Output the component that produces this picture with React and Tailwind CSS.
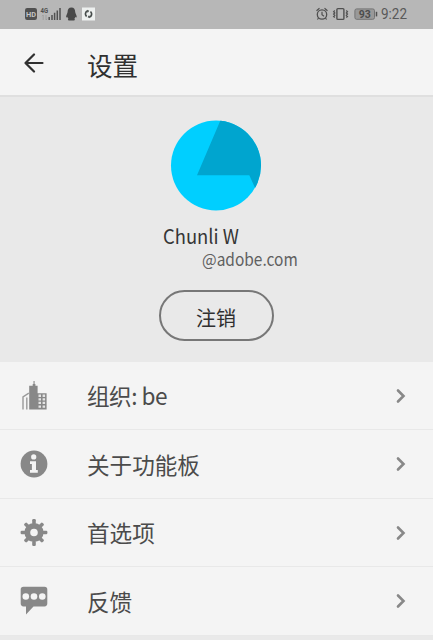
const CJK = "font-['Noto_Sans_CJK_SC',sans-serif]";

function StatusBar() {
  return (
    <div className="flex h-[29px] w-full items-center bg-[#b7b7b7] text-[#4d4d4d]">
      <svg width="110" height="29" viewBox="0 0 110 29" className="shrink-0">
        <rect x="25" y="8" width="12" height="12" rx="2.2" fill="#505050" />
        <text x="31" y="17" fontSize="8" fontWeight="700" textAnchor="middle" textLength="10" lengthAdjust="spacingAndGlyphs" fill="#c4c4c4" fontFamily="Roboto, sans-serif">HD</text>
        <text x="40.6" y="13.2" fontSize="7" fontWeight="700" textLength="7.6" lengthAdjust="spacingAndGlyphs" fill="#505050" fontFamily="Roboto, sans-serif">4G</text>
        <path d="M43.2 15v5M42 16.2l1.2-1.2M46 15v5M46 20l1.2-1.2" stroke="#9a9a9a" strokeWidth="0.8" fill="none" />
        <path d="M49.2 17v3M52 15v5M54.6 12.8v7.2M57.3 10.4v9.6M60 8v12" stroke="#505050" strokeWidth="1.5" />
        <path d="M71.4 7.6c-2.7 0-3.8 2-3.8 4.4 0 1.2-1.5 3-1.5 4.7 0 .9.5.9 1.2.1.2 1 .6 1.5 1.2 2-.8.4-.9 1.7.5 1.7h4.8c1.4 0 1.3-1.3.5-1.7.6-.5 1-1 1.2-2 .7.8 1.2.8 1.2-.1 0-1.7-1.5-3.5-1.5-4.7 0-2.4-1.1-4.4-3.8-4.400z" fill="#484848" />
        <rect x="82" y="7.5" width="13" height="13" fill="#edf0ef" />
        <path d="M87.6 10.8c-2.300 1-3 3.900-1 5.700M89.200 17.200c2.600-.8 3.300-3.800 1.300-5.700" stroke="#454b4a" strokeWidth="1.7" fill="none" />
        <path d="M87 9.800l2.200 1-1.500 2.100zM89.800 18.200l-2.200-1 1.500-2.100z" fill="#454b4a" />
      </svg>
      <div className="flex-1" />
      <svg width="133" height="29" viewBox="300 0 133 29" className="shrink-0" fill="none" stroke="#505050">
        <circle cx="322" cy="14.5" r="4.7" strokeWidth="1.3" />
        <path d="M316.5 10.800l3-2.500M327.500 10.800l-3-2.500M322 11.800v3l2 1.400M318.600 18l-1.200 1.500M325.400 18l1.200 1.500" strokeWidth="1.2" />
        <rect x="336.9" y="8.6" width="7" height="10.8" rx="1" strokeWidth="1.4" />
        <path d="M334.800 10.500l-1.200 1.200 1.200 1.200-1.200 1.200 1.200 1.200-1.200 1.200 1.200 1M346.300 10.500l1.200 1.200-1.200 1.200 1.200 1.200-1.200 1.200 1.200 1.200-1.200 1" strokeWidth="1.2" />
        <rect x="354.9" y="8.9" width="19.6" height="10.4" rx="1.8" fill="#999999" stroke="#737373" strokeWidth="1" />
        <path d="M376.5 11.800v4.600" strokeWidth="1.5" />
        <text x="364.7" y="18" fontSize="10.5" fontWeight="700" textAnchor="middle" fill="#4c4c4c" stroke="none" fontFamily="Roboto, sans-serif">93</text>
        <text x="381" y="18.900" fontSize="14" textLength="26" lengthAdjust="spacingAndGlyphs" fill="#595959" stroke="none" fontFamily="Roboto, sans-serif">9:22</text>
      </svg>
    </div>
  );
}

function BuildingIcon() {
  return (
    <svg width="28" height="32" viewBox="0 0 28 32" fill="#888">
      <path d="M9.200 29.500V5.700h3.500V4h.8V1h1.100v3h.8v1.700h2.200v7.500h9v16.300z" />
      <path d="M3 29.500V16.800l5.800-3.600" fill="none" stroke="#999" strokeWidth="1.4" />
      <path d="M6.800 29.500V17.500" fill="none" stroke="#a0a0a0" strokeWidth="1.5" />
      <path d="M18.500 14.600h2.500v2.300h-2.500zM22.600 14.600h2.500v2.300h-2.500zM18.500 18.200h2.500v2.300h-2.500zM22.600 18.200h2.500v2.300h-2.500zM18.500 21.800h2.500v2.300h-2.500zM22.600 21.800h2.500v2.300h-2.500zM18.500 25.400h2.500v2.300h-2.500zM22.600 25.400h2.500v2.300h-2.500z" fill="#e4e4e4" />
    </svg>
  );
}

function InfoIcon() {
  return (
    <svg width="28" height="28" viewBox="0 0 28 28">
      <circle cx="14" cy="14" r="13.4" fill="#888" />
      <circle cx="13.7" cy="6.9" r="2.6" fill="#f4f4f4" />
      <path d="M10 11.200h6v8.800h1.800v2.800H10V20h1.900v-6H10z" fill="#f4f4f4" />
    </svg>
  );
}

const TEETH = [0, 45, 90, 135, 180, 225, 270, 315];

function GearIcon() {
  return (
    <svg width="28" height="28" viewBox="0 0 28 28" fill="#888">
      <circle cx="14" cy="13.500" r="6.700" fill="none" stroke="#888" strokeWidth="5.800" />
      {TEETH.map((angle) => (
        <rect key={angle} x="12.2" y={angle % 90 ? 0.6 : 0.1} width="3.6" height="5" rx="1.2" transform={`rotate(${angle} 14 13.5)`} />
      ))}
    </svg>
  );
}

function ChatIcon() {
  return (
    <svg width="28" height="30" viewBox="0 0 28 30">
      <path d="M3.500.8h21a2.800 2.800 0 0 1 2.800 2.800v14a2.800 2.800 0 0 1-2.800 2.800H13.500L6 28.400v-8H3.500A2.800 2.800 0 0 1 .7 17.600v-14A2.800 2.800 0 0 1 3.500.8z" fill="#888" />
      <circle cx="5.800" cy="10.500" r="3.300" fill="#f4f4f4" />
      <circle cx="14" cy="10.500" r="3.300" fill="#f4f4f4" />
      <circle cx="22.300" cy="10.500" r="3.300" fill="#f4f4f4" />
    </svg>
  );
}

const ROWS = [
  { label: "组织: be", Icon: BuildingIcon, tracking: "tracking-[-0.5px]" },
  { label: "关于功能板", Icon: InfoIcon, tracking: "tracking-normal" },
  { label: "首选项", Icon: GearIcon, tracking: "tracking-normal" },
  { label: "反馈", Icon: ChatIcon, tracking: "tracking-normal" },
];

function SettingsRow({ label, Icon, tracking }) {
  return (
    <div className="flex h-[68.500px] items-center border-b border-[#e8e8e8] pl-5 pr-[27px] pt-px">
      <div className="flex w-7 shrink-0 justify-center"><Icon /></div>
      <span className={`${CJK} ${tracking} ml-[39px] mt-px flex-1 whitespace-nowrap text-[22.600px] leading-8 text-[#4b4b4b]`}>{label}</span>
      <svg width="10" height="16" viewBox="0 0 10 16" fill="none" stroke="#888" strokeWidth="2.6" strokeLinecap="round">
        <path d="M2 2.500l5.500 5.500L2 13.500" />
      </svg>
    </div>
  );
}

export default function App() {
  return (
    <div className="h-[640px] w-[433px] overflow-hidden bg-[#e9e9e9]">
      <StatusBar />
      <header className="flex h-[68px] items-center border-b-2 border-[#dfdfdf] bg-[#f4f4f4] pl-6">
        <svg width="20" height="20" viewBox="0 0 20 20" className="mt-0.5" fill="none" stroke="#303030" strokeWidth="2.2" strokeLinecap="round" strokeLinejoin="round">
          <path d="M18.500 10H1.500M10 1.500L1.500 10l8.500 8.500" />
        </svg>
        <h1 className={`${CJK} ml-[43px] mt-[5px] text-[25.600px] leading-9 text-[#303030]`}>设置</h1>
      </header>
      <section className="flex h-[264.500px] w-[432px] flex-col items-center pt-[23px]">
        <svg width="92" height="92" viewBox="170 120 92 92">
          <defs>
            <clipPath id="avatar"><circle cx="216" cy="165.500" r="45" /></clipPath>
          </defs>
          <circle cx="216" cy="165.500" r="45" fill="#00cfff" />
          <path clipPath="url(#avatar)" d="M221 119L197 175.300h52.300L256 190h10v-71z" fill="#00a5cf" />
        </svg>
        <div className={`${CJK} mt-[12px] w-[106px] origin-left scale-x-[0.92] whitespace-nowrap text-[20px] leading-6 text-[#353535]`}>Chunli W</div>
        <div className={`${CJK} mt-[-1px] w-[28px] origin-left scale-x-[0.9] whitespace-nowrap text-[17.200px] leading-6 text-[#606060]`}>@adobe.com</div>
        <button className={`${CJK} mt-[19px] flex h-[51px] w-[115px] items-center justify-center rounded-full border-2 border-[#777] text-[20px] text-[#303030]`}>
          <span className="mt-[5px]">注销</span>
        </button>
      </section>
      <main className="h-[274px] bg-[#f4f4f4]">
        {ROWS.map((row) => <SettingsRow key={row.label} {...row} />)}
      </main>
    </div>
  );
}
